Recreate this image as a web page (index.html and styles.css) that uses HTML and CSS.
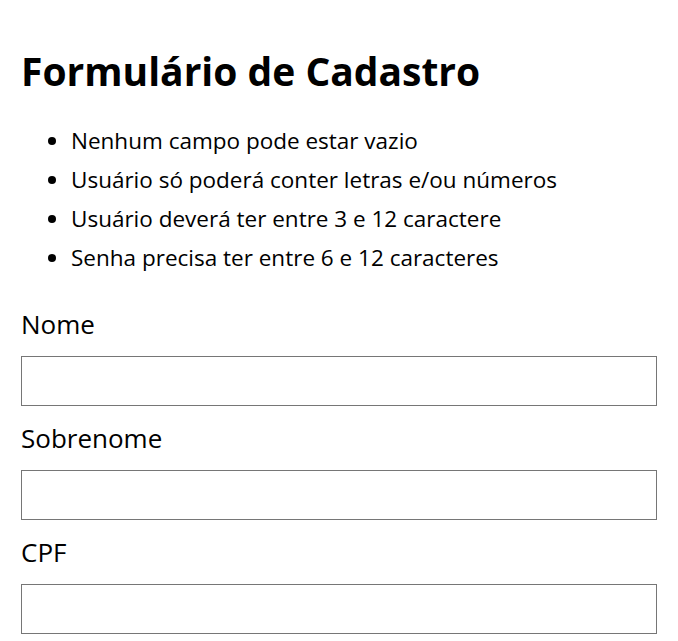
FILE: index.html
```html
<!DOCTYPE html>
<html lang="pt-BR">
<head>
<meta charset="utf-8">
<title>Formulário de Cadastro</title>
<link rel="stylesheet" href="styles.css">
</head>
<body>
<main class="page">
  <h1 class="title">Formulário de Cadastro</h1>
  <ul class="rules">
    <li>Nenhum campo pode estar vazio</li>
    <li>Usuário só poderá conter letras e/ou números</li>
    <li>Usuário deverá ter entre 3 e 12 caractere</li>
    <li>Senha precisa ter entre 6 e 12 caracteres</li>
  </ul>
  <form class="form">
    <label class="field"><span class="label">Nome</span><input class="input" type="text"></label>
    <label class="field"><span class="label">Sobrenome</span><input class="input" type="text"></label>
    <label class="field"><span class="label">CPF</span><input class="input" type="text"></label>
  </form>
</main>
</body>
</html>
```
FILE: styles.css
```css
html, body {
  margin: 0;
  padding: 0;
  background: #fff;
}
body {
  font-family: "Open Sans", sans-serif;
  color: #000;
}
.page {
  padding: 44px 21px 0;
}
.title {
  font-size: 39px;
  font-weight: 700;
  margin: 0 0 23px;
  line-height: 54px;
}
.rules {
  margin: 0 0 29px;
  padding-left: 50px;
  font-size: 22.5px;
  line-height: 39px;
}
.form {
  display: flex;
  flex-direction: column;
}
.field {
  display: flex;
  flex-direction: column;
}
.label {
  font-size: 26px;
  line-height: 36px;
  margin-bottom: 14px;
}
.input {
  box-sizing: border-box;
  width: 100%;
  height: 50px;
  border: 1px solid #767676;
  border-radius: 0;
  margin: 0 0 14px;
  font: inherit;
}
```
